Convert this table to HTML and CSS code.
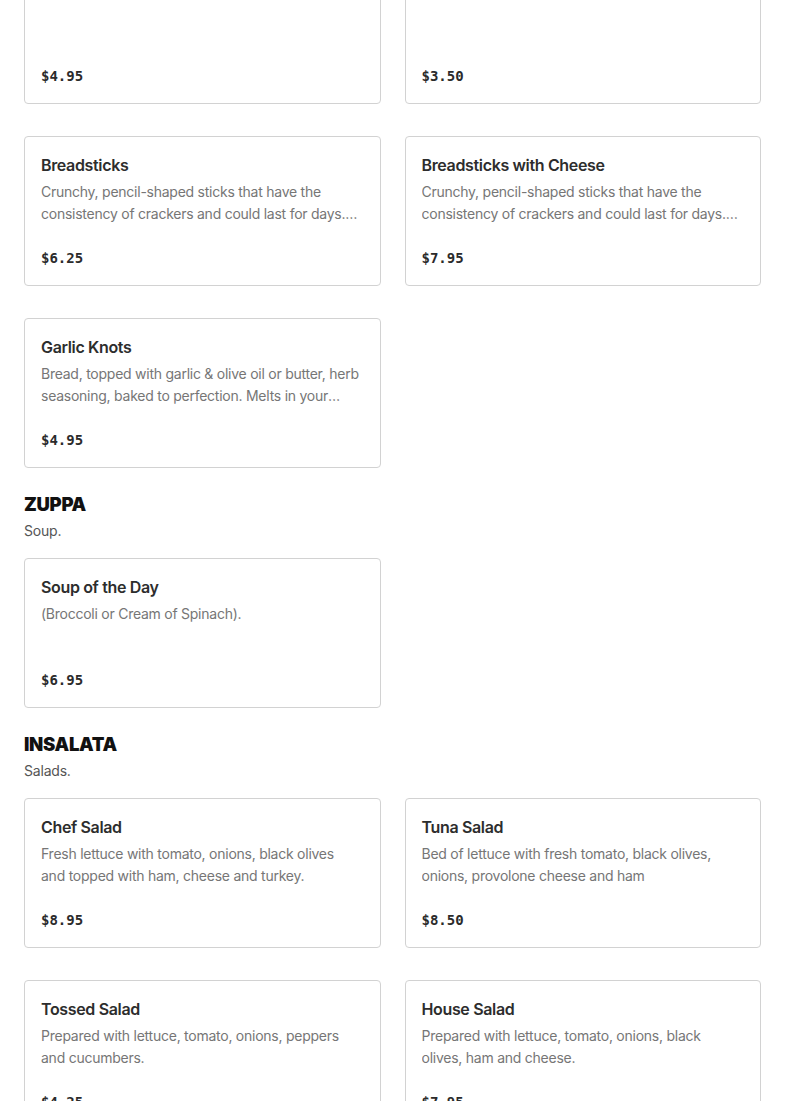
FILE: index.html
```html
<!DOCTYPE html>
<html>
<head>
<meta charset="utf-8">
<link rel="stylesheet" href="styles.css">
</head>
<body>
<main class="menu">
  <section class="section first">
    <div class="grid">
      <div class="card"><h3 class="title">Garlic Bread</h3><p class="desc"></p><div class="price">$4.95</div></div>
      <div class="card"><h3 class="title">Side of Sauce</h3><p class="desc"></p><div class="price">$3.50</div></div>
      <div class="card"><h3 class="title">Breadsticks</h3><p class="desc">Crunchy, pencil-shaped sticks that have the consistency of crackers and could last for days. Great for dipping in sauce.</p><div class="price">$6.25</div></div>
      <div class="card"><h3 class="title">Breadsticks with Cheese</h3><p class="desc">Crunchy, pencil-shaped sticks that have the consistency of crackers and could last for days. Great for dipping in sauce.</p><div class="price">$7.95</div></div>
      <div class="card"><h3 class="title">Garlic Knots</h3><p class="desc">Bread, topped with garlic &amp; olive oil or butter, herb seasoning, baked to perfection. Melts in your mouth.</p><div class="price">$4.95</div></div>
    </div>
  </section>
  <section class="section">
    <h2 class="heading">ZUPPA</h2>
    <p class="sub">Soup.</p>
    <div class="grid">
      <div class="card"><h3 class="title">Soup of the Day</h3><p class="desc">(Broccoli or Cream of Spinach).</p><div class="price">$6.95</div></div>
    </div>
  </section>
  <section class="section">
    <h2 class="heading">INSALATA</h2>
    <p class="sub">Salads.</p>
    <div class="grid">
      <div class="card"><h3 class="title">Chef Salad</h3><p class="desc">Fresh lettuce with tomato, onions, black olives and topped with ham, cheese and turkey.</p><div class="price">$8.95</div></div>
      <div class="card"><h3 class="title">Tuna Salad</h3><p class="desc">Bed of lettuce with fresh tomato, black olives, onions, provolone cheese and ham</p><div class="price">$8.50</div></div>
      <div class="card"><h3 class="title">Tossed Salad</h3><p class="desc">Prepared with lettuce, tomato, onions, peppers and cucumbers.</p><div class="price">$4.25</div></div>
      <div class="card"><h3 class="title">House Salad</h3><p class="desc">Prepared with lettuce, tomato, onions, black olives, ham and cheese.</p><div class="price">$7.95</div></div>
    </div>
  </section>
</main>
</body>
</html>
```
FILE: styles.css
```css
* { box-sizing: border-box; }
html, body { margin: 0; padding: 0; background: #fff; }
body {
  font-family: Inter, "Liberation Sans", sans-serif;
  color: #2b2b2b;
}
.menu { padding: 0 24px; }
.section { margin-top: 24px; }
.section.first { margin-top: -46px; }
.heading {
  margin: 0;
  font-size: 18.5px;
  line-height: 24px;
  font-weight: 900;
  color: #111;
  letter-spacing: -0.3px;
}
.sub {
  margin: 4px 0 0;
  font-size: 14px;
  line-height: 22px;
  color: #555;
  letter-spacing: -0.2px;
}
.sub + .grid { margin-top: 16px; }
.grid {
  display: grid;
  grid-template-columns: 1fr 1fr;
  column-gap: 24px;
  row-gap: 32px;
}
.card {
  border: 1px solid #d2d2d2;
  border-radius: 4px;
  padding: 16px 19px 16px 16px;
  height: 150px;
  display: flex;
  flex-direction: column;
}
.title {
  margin: 0;
  font-size: 16px;
  line-height: 24px;
  font-weight: 600;
  letter-spacing: -0.35px;
  color: #2d2d2d;
}
.desc {
  margin: 4px 0 0;
  font-size: 14px;
  line-height: 22px;
  height: 44px;
  letter-spacing: -0.25px;
  color: #767676;
  overflow: hidden;
  display: -webkit-box;
  -webkit-line-clamp: 2;
  -webkit-box-orient: vertical;
}
.price {
  margin-top: 23px;
  font-family: "DejaVu Sans Mono", "Liberation Mono", monospace;
  font-weight: 700;
  font-size: 14px;
  line-height: 20px;
  color: #2b2b2b;
}
```
